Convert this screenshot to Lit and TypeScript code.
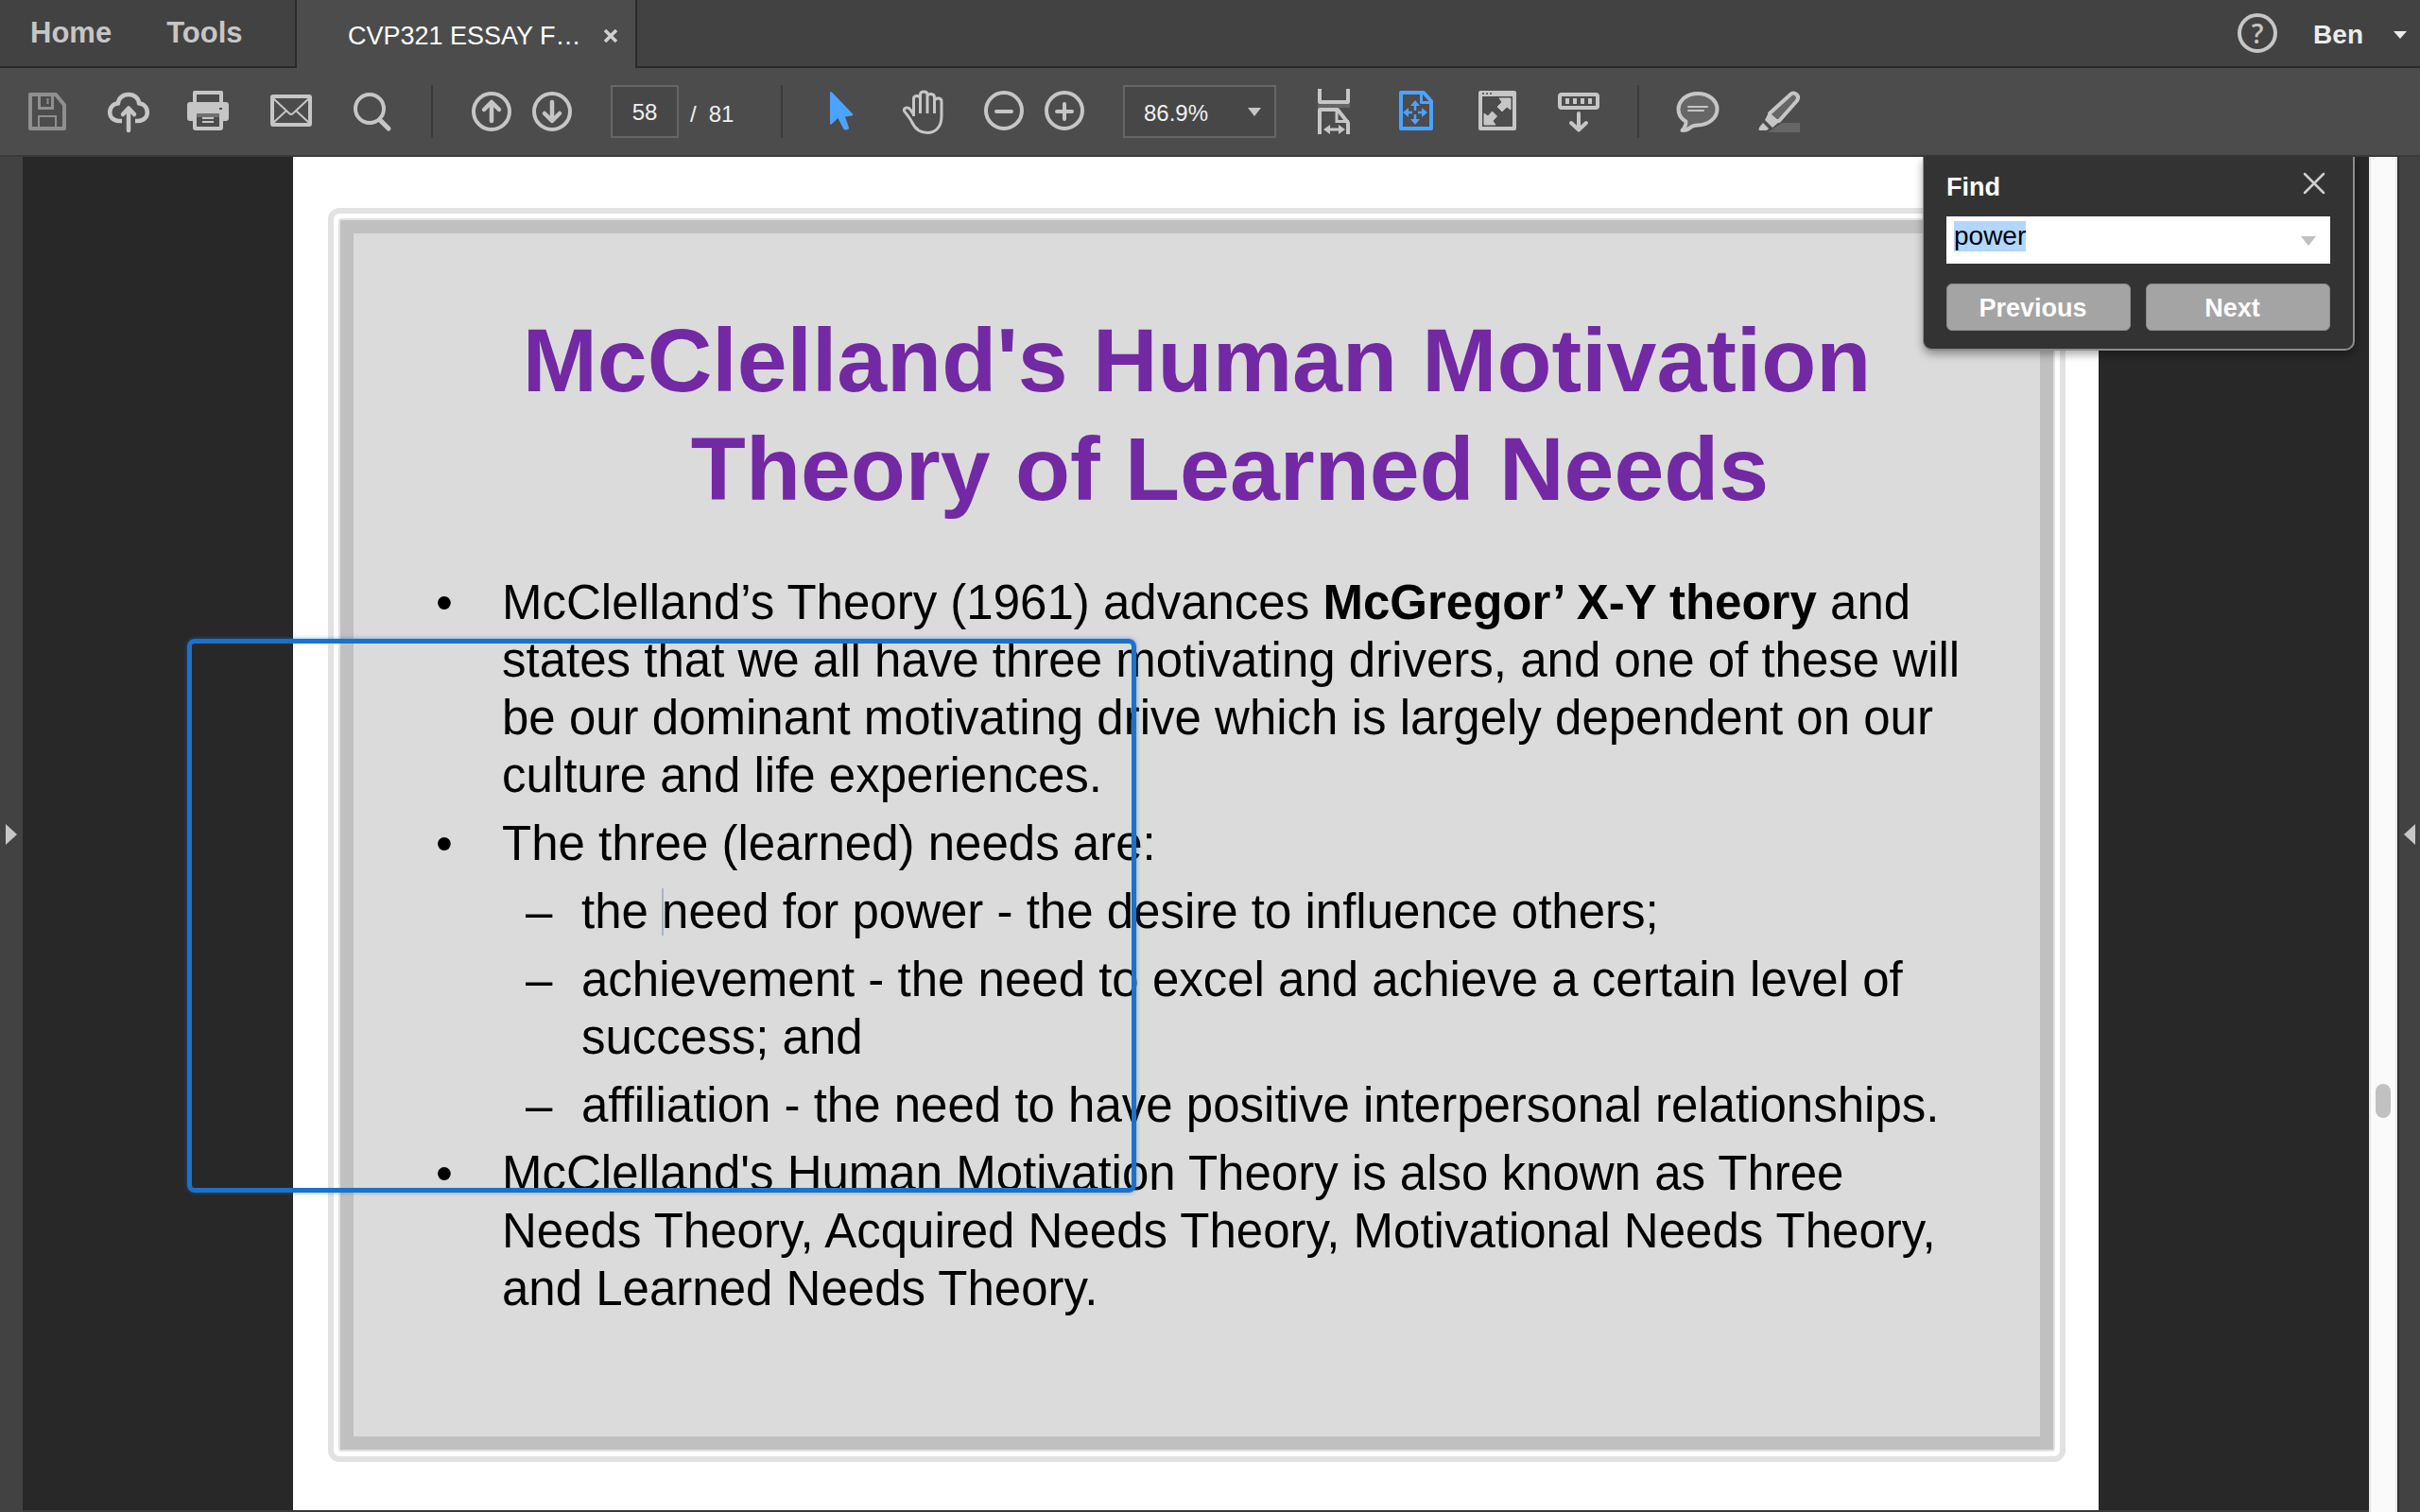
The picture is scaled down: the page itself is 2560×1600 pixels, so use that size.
import { LitElement, html, css, svg } from "lit";
import type { TemplateResult } from "lit";
import { customElement, state, query } from "lit/decorators.js";

const icons: Record<string, TemplateResult> = {
  save: svg`<g fill="none" stroke="#8f8f8f">
    <path stroke-width="4" stroke-linejoin="round" d="M4 4H31L40 15V40H4Z"/>
    <path stroke-width="3" d="M13.500 4V18.500H27.500V4"/>
    <path stroke-width="2" d="M22.500 8V14"/>
    <path stroke-width="2" d="M13 40V27H31V40"/></g>`,
  cloud: svg`<g fill="none" stroke="currentColor" stroke-width="4.500" stroke-linecap="round" stroke-linejoin="round">
    <path stroke-linecap="butt" d="M15 32H12C5.500 32 2.200 27.500 2.200 23C2.200 17.500 6 13.500 11 13.500C11 8 16 4 22 4S33 8 33 13.500C38 13.500 41.800 17.500 41.800 23C41.800 27.500 38.500 32 32 32H29"/>
    <path d="M22 42V19M16 25L22 18.500L28 25"/></g>`,
  print: svg`<g transform="translate(-2 0)"><path fill="currentColor" d="M3 12H41Q44 12 44 15V29Q44 32 41 32H38V39Q38 42 35 42H9Q6 42 6 39V32H3Q0 32 0 29V15Q0 12 3 12Z"/>
    <path fill="#4c4c4c" stroke="currentColor" stroke-width="4" stroke-linejoin="round" d="M8 2H36V14H8Z"/>
    <path fill="currentColor" d="M6 14H38V20H6Z"/><path fill="#4c4c4c" d="M10 24H34V38H10Z"/><path fill="#707070" d="M10 24H34V28H10Z"/>
    <path stroke="currentColor" stroke-width="2" d="M16 29H28M16 33H28"/><rect x="34" y="18" width="3" height="2" fill="#4c4c4c"/></g>`,
  mail: svg`<g fill="none" stroke="currentColor" stroke-linejoin="round"><rect x="2" y="6" width="40" height="30" rx="1" stroke-width="4"/>
    <path stroke-width="2" d="M3 8L20 24Q22 26 24 24L41 8M3 34L17 21M41 34L27 21"/></g>`,
  search: svg`<circle cx="19" cy="19" r="15" fill="none" stroke="currentColor" stroke-width="4"/>
    <path stroke="currentColor" stroke-width="5" stroke-linecap="round" d="M30 31L39 40"/>`,
  up: svg`<g fill="none" stroke="currentColor" stroke-width="4.500" stroke-linecap="round" stroke-linejoin="round"><circle cx="22" cy="22" r="19" stroke-width="4"/><path d="M22 32V12.500M14 20L22 12L30 20"/></g>`,
  down: svg`<g fill="none" stroke="currentColor" stroke-width="4.500" stroke-linecap="round" stroke-linejoin="round"><circle cx="22" cy="22" r="19" stroke-width="4"/><path d="M22 12V31.500M14 24L22 32L30 24"/></g>`,
  pointer: svg`<path fill="#4ba3ff" d="M10 2Q10.500 0 12.500 2L34 24.500Q35 26 33 26.500L26 27.500L30 39Q30 41.500 27 41.500Q25 41.500 24 40L18.500 29L11.500 35.500Q10 36 10 35Z"/>`,
  hand: svg`<path fill="none" stroke="currentColor" stroke-width="3" stroke-linecap="butt" stroke-linejoin="round" d="M12.500 27V8.500C12.500 4.500 19.500 4.500 19.500 8.500V24M19.500 9V4C19.500 0 27 0 27 4V24M27 5.500C28 2.500 34.500 2.500 34.500 7V24M34.500 11C35 7 42 7 42 11.500V27C42 39 35 44.500 27 44.500C19 44.500 14 40 11 34C9 29 5 25 2.500 21.500C1.500 17.500 6.500 17 9 20L13 26"/>`,
  minus: svg`<g fill="none" stroke="currentColor" stroke-width="4" stroke-linecap="round"><circle cx="22" cy="21" r="19"/><path d="M14 22H30"/></g>`,
  plus: svg`<g fill="none" stroke="currentColor" stroke-width="4" stroke-linecap="round"><circle cx="22" cy="21" r="19"/><path d="M14 22H30M22 14V30"/></g>`,
  width: svg`<path fill="#666" d="M4 14H38V18H4Z"/><g fill="none" stroke="currentColor" stroke-width="4"><path stroke-linejoin="round" d="M6 -2V12H36V-2M6 46V20H25L36 34V46"/>
    <path stroke-width="3" d="M24 20V32.500H37M14 41H29"/></g><path fill="currentColor" d="M17 36V46L10 41ZM26 36V46L33 41Z"/>`,
  fit: svg`<g fill="none" stroke="#4ba3ff" stroke-width="4" stroke-linejoin="round"><path d="M6 2H30L38 11V40H6Z"/><path stroke-width="3" d="M27.500 3V12.500H38"/>
    <path stroke-width="2.500" d="M21 14V21M21 25V32M11 23H18M24 23H31"/></g>
    <path fill="#4ba3ff" d="M21 10L26 16H16ZM21 36L26 30H16ZM8 23L14 18V28ZM34 23L28 18V28Z"/>`,
  full: svg`<path fill="none" stroke="currentColor" stroke-width="4" stroke-linejoin="round" d="M4 2H40V40H4Z"/><path fill="currentColor" d="M4 2H40V6H4Z"/>
    <path stroke="#666" stroke-width="2" stroke-dasharray="2 2" d="M6 3H16"/>
    <path fill="currentColor" stroke="currentColor" stroke-linejoin="round" d="M36 8V20L32 17L27 22L22 17L27 12L24 8ZM8 36V24L12 27L16.500 22L21.500 27L17 32L20 36Z"/>`,
  ruler: svg`<rect x="2" y="4" width="40" height="14" rx="2" fill="none" stroke="currentColor" stroke-width="4"/>
    <path stroke="currentColor" stroke-width="4" d="M10 8V14M18 8V14M26 8V14M34 8V14"/>
    <path fill="none" stroke="currentColor" stroke-width="4" stroke-linecap="round" stroke-linejoin="round" d="M22 24V41M14 34L22 41.500L30 34"/>`,
  comment: svg`<path fill="#666" stroke="currentColor" stroke-width="4" stroke-linejoin="round" d="M22 3C33 3 42.500 10 42.500 19.500S33 36.500 22 36.500Q17 36.500 14 39Q11 42 5.500 42Q9.500 38 9.500 32.500C4 29.500 1.500 25 1.500 19.500C1.500 10 11 3 22 3Z"/>
    <path stroke="currentColor" stroke-width="2" stroke-linecap="round" d="M12 17H32M12 21H28"/>`,
  marker: svg`<path fill="#666" d="M25 34H44V44H10Z"/><path fill="#666" stroke="currentColor" stroke-width="4" stroke-linejoin="round" d="M12 24L34 4Q37 1 40.500 4Q43.500 7 41 10.500L22 32L19 32L12 26Z"/>
    <path fill="currentColor" d="M10 25L21 34L15 39L7 31ZM5 34L11 40Q10 42 8 42H1Q0 41 1 39Q3 36 5 34Z"/>`,
};

@customElement("app-root")
export class AppRoot extends LitElement {
  static styles = css`
    :host {
      display: flex; flex-direction: column; min-height: 100vh;
      background: #282828; color: #fff;
      font-family: "Liberation Sans", Arial, sans-serif;
    }
    * { box-sizing: border-box; }
    button, input, select { font: inherit; color: inherit; border: 0; margin: 0; padding: 0; background: none; border-radius: 0; appearance: none; outline: none; }
    svg { display: block; overflow: visible; }

    .tabs { display: flex; height: 72px; background: #424242; }
    .nav { display: flex; align-items: center; gap: 58px; width: 314px; padding-left: 32px; border-right: 2px solid #2a2a2a; border-bottom: 2px solid #2a2a2a; }
    .nav a { color: #c6c6c6; font-size: 31px; font-weight: bold; text-decoration: none; }
    .tab { display: flex; align-items: center; gap: 24px; width: 358px; padding: 4px 0 0 54px; background: #4c4c4c; font-size: 27px; white-space: nowrap; }
    .tab-close { color: #d0d0d0; }
    .account { flex: 1; display: flex; align-items: center; justify-content: flex-end; gap: 32px; padding-right: 14px; border-left: 2px solid #2a2a2a; border-bottom: 2px solid #2a2a2a; }
    .help { width: 42px; height: 42px; border: 4px solid #c6c6c6; border-radius: 50%; color: #c6c6c6; font: 600 28px/34px "Open Sans", sans-serif; margin-right: 6px; }
    .user { display: flex; align-items: center; gap: 32px; font-size: 28px; font-weight: bold; color: #ececec; line-height: 32px; padding-top: 4px; }

    .toolbar { display: flex; align-items: center; gap: 40px; height: 94px; padding: 0 28px; background: #4c4c4c; border-bottom: 2px solid #3a3a3a; color: #c6c6c6; }
    .group { display: flex; gap: 42px; }
    .pair { gap: 20px; }
    .tool { width: 44px; height: 44px; }
    .rule { width: 2px; height: 56px; background: #3a3a3a; }
    .pager { display: flex; align-items: center; gap: 12px; width: 140px; font-size: 24px; color: #f0f0f0; }
    .field { width: 72px; height: 56px; border: 2px solid #666; background: #474747; text-align: center; padding-top: 2px; }
    .total { display: flex; gap: 13px; padding-top: 6px; }
    .zoom { position: relative; width: 162px; height: 56px; font-size: 24px; color: #f0f0f0; }
    .zoom select { width: 100%; height: 100%; padding: 2px 0 0 20px; border: 2px solid #666; background: #474747; }
    .caret { position: absolute; right: 16px; top: 24px; color: #c6c6c6; pointer-events: none; }

    .body { position: relative; flex: 1; display: flex; }
    .rail { width: 24px; background: #424242; display: flex; align-items: center; justify-content: center; color: #c6c6c6; }
    .rail-right { border-left: 2px solid #303030; }
    .viewer { flex: 1; display: flex; justify-content: center; border-bottom: 2px solid #3a3a3a; }
    .page { flex: 1; max-width: 1910px; display: flex; background: #fff; color: #000; padding: 54px 35px 51px 37px; }
    .frame { flex: 1; display: flex; border: 6px solid #e2e2e2; border-radius: 12px; padding: 5px; }
    .bevel { flex: 1; display: flex; border: 2px solid #e2e2e2; border-radius: 3px; }
    .slide { flex: 1; border: 14px solid #c0c0c0; background: #dbdbdb; padding: 77px 73px 0 87px; }
    h1 { margin: 0 14px 53px 0; font-size: 95px; line-height: 115px; text-align: center; color: #7229a3; }
    .line { display: block; }
    .second { padding-left: 70px; }
    ul { list-style: none; margin: 0; padding: 0; display: flex; flex-direction: column; gap: 11px; font-size: 51px; line-height: 61px; }
    li { display: grid; grid-template-columns: 70px 1fr; row-gap: 11px; }
    li::before { content: "•"; }
    .sub { grid-column: 2; margin-left: 25px; }
    .sub li { grid-template-columns: 59px 1fr; }
    .sub li::before { content: "–"; }
    .insert { position: relative; }
    .insert::before { content: ""; position: absolute; left: 0; top: 4px; width: 2px; height: 50px; background: #a9b4c4; }
    .scroll { width: 30px; background: #fafafa; border: solid #e6e6e6; border-width: 0 2px; display: flex; flex-direction: column; align-items: center; }
    .lead { flex: 981; }
    .thumb { width: 16px; height: 36px; border-radius: 8px; background: #c1c1c1; }
    .trail { flex: 417; }

    .marquee { position: absolute; left: 198px; top: 510px; width: 1004px; height: 586px; border: 5px solid #1a72cc; border-radius: 8px; box-shadow: 0 0 4px rgba(26, 114, 204, .6); pointer-events: none; }

    .find { position: absolute; right: 69px; top: 0; width: 457px; height: 205px; padding: 16px 24px 20px; background: #333; border: solid #8c8c8c; border-width: 0 2px 2px 1px; border-radius: 0 0 10px 10px; box-shadow: 0 4px 10px rgba(0, 0, 0, .35); font-size: 27px; }
    .find-head { display: flex; justify-content: space-between; align-items: center; height: 32px; padding-right: 6px; font-weight: bold; }
    .find-close { padding-bottom: 8px; color: #cfcfcf; }
    .query { position: relative; margin: 15px 0 21px; }
    .query input { display: block; width: 100%; height: 50px; padding: 4px 40px 12px 8px; background: #fff; color: #000; font-size: 28px; line-height: 34px; }
    .query input::selection { background: #b2d7ff; color: #000; }
    .query-caret { position: absolute; right: 15px; top: 21px; color: #c0c0c0; }
    .actions { display: flex; gap: 16px; }
    .actions button { flex: 1; height: 50px; padding: 2px 12px 0 0; border: 1px solid #8a8a8a; border-radius: 6px; background: #a4a4a4; color: #fff; font-weight: bold; }
  `;

  @state() private page = "58";
  @query("#find-text") private findText!: HTMLInputElement;

  firstUpdated() {
    this.findText.focus();
    this.findText.select();
  }

  private tool(name: string, label: string) {
    return html`<button class="tool" aria-label=${label}><svg width="44" height="44" viewBox="0 0 44 44" aria-hidden="true">${icons[name]}</svg></button>`;
  }

  private triangle(width: number, height: number) {
    return html`<svg width=${width} height=${height} viewBox="0 0 14 8" preserveAspectRatio="none" aria-hidden="true"><path fill="currentColor" d="M0 0H14L7 8Z"/></svg>`;
  }

  render() {
    return html`
      <header class="tabs">
        <nav class="nav"><a href="#home">Home</a><a href="#tools">Tools</a></nav>
        <div class="tab"><span>CVP321 ESSAY F…</span>
          <button class="tab-close" aria-label="Close tab"><svg width="14" height="14" viewBox="0 0 14 14"><path stroke="currentColor" stroke-width="3.500" d="M1 1L13 13M13 1L1 13"/></svg></button>
        </div>
        <div class="account">
          <button class="help" aria-label="Help">?</button>
          <button class="user">Ben ${this.triangle(14, 8)}</button>
        </div>
      </header>
      <div class="toolbar" role="toolbar" aria-label="Document tools">
        <div class="group">${this.tool("save", "Save")}${this.tool("cloud", "Upload")}${this.tool("print", "Print")}${this.tool("mail", "Email")}${this.tool("search", "Search")}</div>
        <div class="rule"></div>
        <div class="group pair">${this.tool("up", "Previous page")}${this.tool("down", "Next page")}</div>
        <div class="pager"><input class="field" aria-label="Page number" .value=${this.page} @change=${(e: Event) => (this.page = (e.target as HTMLInputElement).value)}><span class="total"><span>/</span><span>81</span></span></div>
        <div class="rule"></div>
        <div class="group">${this.tool("pointer", "Select")}${this.tool("hand", "Pan")}<div class="group pair">${this.tool("minus", "Zoom out")}${this.tool("plus", "Zoom in")}</div></div>
        <div class="zoom"><select aria-label="Zoom level"><option>86.9%</option><option>100%</option></select><span class="caret">${this.triangle(14, 9)}</span></div>
        <div class="group">${this.tool("width", "Fit width")}${this.tool("fit", "Fit page")}${this.tool("full", "Full screen")}${this.tool("ruler", "Show tools")}</div>
        <div class="rule"></div>
        <div class="group">${this.tool("comment", "Comment")}${this.tool("marker", "Highlight")}</div>
      </div>
      <main class="body">
        <button class="rail" aria-label="Open left panel"><svg width="12" height="22" viewBox="0 0 12 22"><path fill="currentColor" d="M0 0L12 11L0 22Z"/></svg></button>
        <div class="viewer">
          <article class="page"><div class="frame"><div class="bevel"><div class="slide">
            <h1><span class="line">McClelland's Human Motivation</span><span class="line second">Theory of Learned Needs</span></h1>
            <ul>
              <li><span>McClelland’s Theory (1961) advances <b>McGregor’ X-Y theory</b> and states that we all have three motivating drivers, and one of these will be our dominant motivating drive which is largely dependent on our culture and life experiences.</span></li>
              <li><span>The three (learned) needs are:</span>
                <ul class="sub">
                  <li><span>the <span class="insert">need</span> for power - the desire to influence others;</span></li>
                  <li><span>achievement - the need to excel and achieve a certain level of success; and</span></li>
                  <li><span>affiliation - the need to have positive interpersonal relationships.</span></li>
                </ul>
              </li>
              <li><span>McClelland's Human Motivation Theory is also known as Three Needs Theory, Acquired Needs Theory, Motivational Needs Theory, and Learned Needs Theory.</span></li>
            </ul>
          </div></div></div></article>
        </div>
        <div class="scroll"><div class="lead"></div><div class="thumb"></div><div class="trail"></div></div>
        <button class="rail rail-right" aria-label="Open right panel"><svg width="12" height="22" viewBox="0 0 12 22"><path fill="currentColor" d="M12 0L0 11L12 22Z"/></svg></button>
        <div class="marquee"></div>
        <form class="find" @submit=${(e: Event) => e.preventDefault()}>
          <div class="find-head"><label for="find-text">Find</label>
            <button type="button" class="find-close" aria-label="Close find"><svg width="22" height="22" viewBox="0 0 22 22"><path stroke="currentColor" stroke-width="2.500" stroke-linecap="round" d="M1 1L21 21M21 1L1 21"/></svg></button></div>
          <div class="query"><input id="find-text" type="text" value="power"><span class="query-caret">${this.triangle(16, 10)}</span></div>
          <div class="actions"><button type="button">Previous</button><button type="submit">Next</button></div>
        </form>
      </main>`;
  }
}
